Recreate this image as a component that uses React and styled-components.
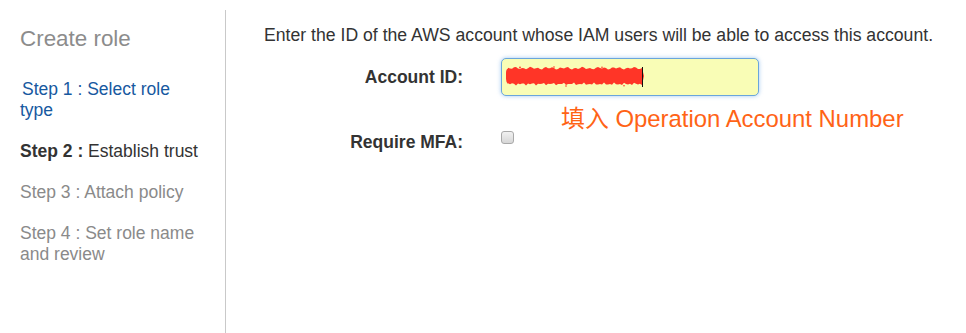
import React from 'react'
import styled, { createGlobalStyle } from 'styled-components'

const GlobalStyle = createGlobalStyle`
  html, body {
    margin: 0;
    padding: 0;
    background: #fff;
  }
  body {
    font-family: "Liberation Sans", Arial, "Noto Sans CJK SC", sans-serif;
    color: #333;
  }
`

const Page = styled.div`
  display: flex;
  width: 966px;
  height: 333px;
  overflow: hidden;
`

const Sidebar = styled.nav`
  width: 183px;
  margin-top: 10px;
  padding: 16px 22px 0 20px;
  border-right: 1px solid #c9c9c9;
  flex-shrink: 0;
`

const Title = styled.h2`
  margin: 0 0 27px;
  font-size: 22.4px;
  line-height: 26px;
  font-weight: normal;
  color: #8c8c8c;
`

const Steps = styled.ul`
  list-style: none;
  margin: 0;
  padding: 0;
`

const Step = styled.li`
  margin-bottom: 20px;
  font-size: 17.5px;
  line-height: 21px;
  color: ${p => (p.$state === 'done' ? '#17599f' : p.$state === 'current' ? '#333' : '#8a8a8a')};
  text-indent: ${p => (p.$indent ? '2px' : '0')};
  b {
    font-weight: bold;
  }
`

const Main = styled.main`
  flex: 1;
  padding: 25px 0 0 38px;
`

const Intro = styled.p`
  margin: 0 0 12px;
  font-size: 17.65px;
  line-height: 21px;
  color: #333;
  white-space: nowrap;
`

const Form = styled.div`
  display: grid;
  grid-template-columns: 199px 1fr;
  column-gap: 38px;
`

const Label = styled.label`
  font-size: 17.5px;
  line-height: 21px;
  font-weight: bold;
  color: #333;
  text-align: right;
  align-self: ${p => p.$align || 'center'};
`

const Field = styled.div`
  position: relative;
  width: 258px;
  height: 38px;
`

const TextInput = styled.input`
  box-sizing: border-box;
  width: 100%;
  height: 100%;
  padding: 0 10px;
  border: 1px solid #6aa6dc;
  border-radius: 5px;
  background: #f9fdb6;
  box-shadow: 0 0 4px rgba(102, 165, 230, 0.6);
  font-family: "Liberation Sans", Arial, sans-serif;
  font-size: 17.5px;
  color: #222;
  outline: none;
`

const Redaction = styled.svg`
  position: absolute;
  left: 5px;
  top: 7px;
  pointer-events: none;
`

const Caret = styled.span`
  position: absolute;
  left: 141px;
  top: 9px;
  width: 1px;
  height: 20px;
  background: #111;
`

const Note = styled.div`
  grid-column: 2;
  height: 26px;
  margin: 10px 0 0 60px;
  font-size: 23.9px;
  line-height: 26px;
  color: #ff6316;
  white-space: nowrap;
`

const Check = styled.input`
  appearance: none;
  box-sizing: border-box;
  width: 13px;
  height: 13px;
  margin: -1px 0 0;
  border: 1px solid #a9a9a9;
  border-radius: 3px;
  background: linear-gradient(#f2f2f2, #d6d6d6);
  justify-self: start;
`

// fuzzy marker band used to hide the account number
function scribblePath() {
  const w = 137
  const top = []
  const bottom = []
  for (let x = 2; x <= w; x += 2) {
    const t1 = 3.2 + Math.sin(x * 2.3) * 0.9 + Math.cos(x * 0.37) * 0.6
    const t2 = 19 + Math.sin(x * 1.9 + 1) * 0.9 + Math.cos(x * 0.61) * 0.6
    top.push(`${x},${t1.toFixed(1)}`)
    bottom.unshift(`${x},${t2.toFixed(1)}`)
  }
  return `M0,8 Q0,4 2,3.5 L${top.join(' L')} L${w + 1},11 L${bottom.join(' L')} L2,19 Q0,17 0,14 Z`
}

export default function App() {
  return (
    <Page>
      <GlobalStyle />
      <Sidebar>
        <Title>Create role</Title>
        <Steps>
          <Step $state="done" $indent>Step 1 : Select role type</Step>
          <Step $state="current"><b>Step 2 :</b> Establish trust</Step>
          <Step>Step 3 : Attach policy</Step>
          <Step>Step 4 : Set role name and review</Step>
        </Steps>
      </Sidebar>
      <Main>
        <Intro>Enter the ID of the AWS account whose IAM users will be able to access this account.</Intro>
        <Form>
          <Label>Account ID:</Label>
          <Field>
            <TextInput value="ac" readOnly />
            <Redaction width="142" height="23" viewBox="0 0 142 23">
              <path d={scribblePath()} fill="#ff3527" />
              <circle cx="14" cy="2.4" r="0.9" fill="#ff3527" />
              <circle cx="48" cy="2" r="0.8" fill="#ff3527" />
              <circle cx="96" cy="2.2" r="0.8" fill="#ff3527" />
              <circle cx="60" cy="21" r="0.8" fill="#ff3527" />
              <circle cx="118" cy="20.8" r="0.8" fill="#ff3527" />
            </Redaction>
            <Caret />
          </Field>
          <Note>填入 Operation Account Number</Note>
          <Label $align="start">Require MFA:</Label>
          <Check type="checkbox" />
        </Form>
      </Main>
    </Page>
  )
}
